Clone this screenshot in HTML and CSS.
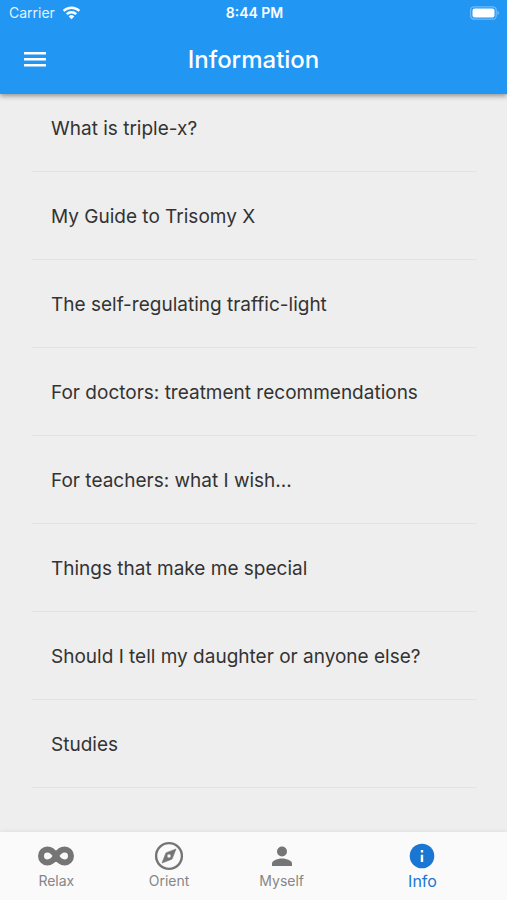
FILE: index.html
```html
<!DOCTYPE html>
<html lang="en">
<head>
<meta charset="utf-8">
<meta name="viewport" content="width=device-width, initial-scale=1">
<title>Information</title>
<link rel="stylesheet" href="styles.css">
</head>
<body>
<header class="header">
  <div class="status">
    <div class="carrier">
      <span>Carrier</span>
      <svg class="wifi" viewBox="0 0 20 15" aria-hidden="true">
        <g fill="none" stroke="currentColor" stroke-width="2.6">
          <path d="M1.700 4.800a11.700 11.700 0 0 1 16.600 0"/>
          <path d="M5 8.200a7 7 0 0 1 10 0"/>
        </g>
        <path d="M10 13.500 7.100 10.600a4.100 4.100 0 0 1 5.800 0z" fill="currentColor"/>
      </svg>
    </div>
    <span class="time">8:44 PM</span>
    <svg class="battery" viewBox="0 0 31 14" aria-hidden="true">
      <rect x="1.600" y=".8" width="25.600" height="12.400" rx="3.500" fill="none" stroke="currentColor" stroke-width="1.300" opacity=".35"/>
      <rect x="3.500" y="2.500" width="22" height="9" rx="2" fill="currentColor"/>
      <path d="M28.500 4.800a2.400 2.400 0 0 1 0 4.400z" fill="currentColor" opacity=".4"/>
    </svg>
  </div>
  <div class="appbar">
    <button class="menu" type="button" aria-label="Menu">
      <svg viewBox="0 0 24 16" aria-hidden="true"><path d="M1 0h22v2.600H1zM1 6h22v2.600H1zM1 12h22v2.600H1z" fill="currentColor"/></svg>
    </button>
    <h1 class="title">Information</h1>
  </div>
</header>
<main class="content">
  <ul class="list">
    <li><a class="item" href="#">What is triple-x?</a></li>
    <li><a class="item" href="#">My Guide to Trisomy X</a></li>
    <li><a class="item" href="#">The self-regulating traffic-light</a></li>
    <li><a class="item" href="#">For doctors: treatment recommendations</a></li>
    <li><a class="item" href="#">For teachers: what I wish...</a></li>
    <li><a class="item" href="#">Things that make me special</a></li>
    <li><a class="item" href="#">Should I tell my daughter or anyone else?</a></li>
    <li><a class="item" href="#">Studies</a></li>
  </ul>
</main>
<nav class="tabs">
  <a class="tab" href="#">
    <svg class="icon" viewBox="0 0 38 30" aria-hidden="true"><path d="M19 15C16.500 10.500 14 8.600 10.400 8.600a6.400 6.400 0 0 0 0 12.800c3.600 0 6.100-1.900 8.600-6.400s5-6.400 8.600-6.400a6.400 6.400 0 0 1 0 12.800c-3.600 0-6.100-1.900-8.600-6.400z" fill="none" stroke="currentColor" stroke-width="6"/></svg>
    <span>Relax</span>
  </a>
  <a class="tab" href="#">
    <svg class="icon" viewBox="0 0 38 30" aria-hidden="true">
      <circle cx="19" cy="15" r="12.900" fill="none" stroke="currentColor" stroke-width="2.400"/>
      <path fill="currentColor" fill-rule="evenodd" d="M26 8l-3.800 9.800a1 1 0 0 1-.5.500L12 22l3.800-9.800a1 1 0 0 1 .5-.500zM19 13a2 2 0 1 0 0 4 2 2 0 0 0 0-4z" stroke="currentColor" stroke-width=".6" stroke-linejoin="round"/>
    </svg>
    <span>Orient</span>
  </a>
  <a class="tab" href="#">
    <svg class="icon" viewBox="0 0 38 30" aria-hidden="true"><g fill="currentColor"><circle cx="19" cy="10.500" r="5"/><path d="M9 25v-2.500c0-3.300 6.700-5 10-5s10 1.700 10 5V25z"/></g></svg>
    <span>Myself</span>
  </a>
  <a class="tab tab-active" href="#" aria-current="page">
    <svg class="icon" viewBox="0 0 38 30" aria-hidden="true"><circle cx="19" cy="15" r="12.300" fill="currentColor"/><path d="M17.800 9h2.400v2.400h-2.400zM17.800 13.800h2.400V21h-2.400z" fill="#fff"/></svg>
    <span>Info</span>
  </a>
</nav>
</body>
</html>
```
FILE: styles.css
```css
* {
  box-sizing: border-box;
}

body {
  margin: 0;
  min-height: 100vh;
  display: flex;
  flex-direction: column;
  background: #eee;
  color: #333;
  font-family: Inter, "Liberation Sans", sans-serif;
}

a {
  color: inherit;
  text-decoration: none;
}

.header {
  position: relative;
  z-index: 1;
  background: #2196f3;
  color: #fff;
  box-shadow: 0 2px 5px rgba(0, 0, 0, 0.4);
}

.status {
  display: grid;
  grid-template-columns: 1fr auto 1fr;
  align-items: center;
  height: 26px;
  padding: 0 7px 0 9px;
  font-size: 14px;
  line-height: 20px;
}

.carrier {
  display: flex;
  align-items: center;
  gap: 7px;
  color: #e3f2fd;
}

.wifi {
  width: 19px;
  height: 15px;
  color: #fff;
}

.time {
  font-size: 14px;
  font-weight: 600;
}

.battery {
  width: 31px;
  height: 14px;
  justify-self: end;
}

.appbar {
  display: grid;
  grid-template-columns: 48px 1fr 48px;
  align-items: center;
  height: 68px;
  padding: 0 11px;
}

.menu {
  display: flex;
  align-items: center;
  justify-content: center;
  width: 48px;
  height: 48px;
  padding: 0;
  border: 0;
  background: none;
  color: #fff;
}

.menu svg {
  width: 24px;
  height: 16px;
}

.title {
  margin: 0;
  font-size: 24px;
  line-height: 32px;
  font-weight: 500;
  text-align: center;
}

.content {
  flex: 1;
  padding: 0 30px 0 32px;
}

/* The list starts slightly scrolled under the header. */
.list {
  margin: -10px 0 0;
  padding: 0;
  list-style: none;
}

.item {
  display: flex;
  align-items: center;
  height: 88px;
  padding: 2px 19px 0;
  border-bottom: 1px solid #e3e3e3;
  font-size: 19px;
  line-height: 24px;
}

.tabs {
  display: grid;
  grid-template-columns: 2fr 2fr 2fr 3fr;
  height: 68px;
  background: #fafafa;
  box-shadow: 0 -1px 4px rgba(0, 0, 0, 0.06);
}

.tab {
  display: flex;
  flex-direction: column;
  align-items: center;
  padding-top: 9px;
  color: #757575;
  font-size: 14px;
  line-height: 20px;
}

.tab span {
  color: #868686;
}

.icon {
  width: 38px;
  height: 30px;
}

.tab-active {
  color: #1976d2;
  font-size: 16px;
}

.tab-active span {
  color: inherit;
}
```
